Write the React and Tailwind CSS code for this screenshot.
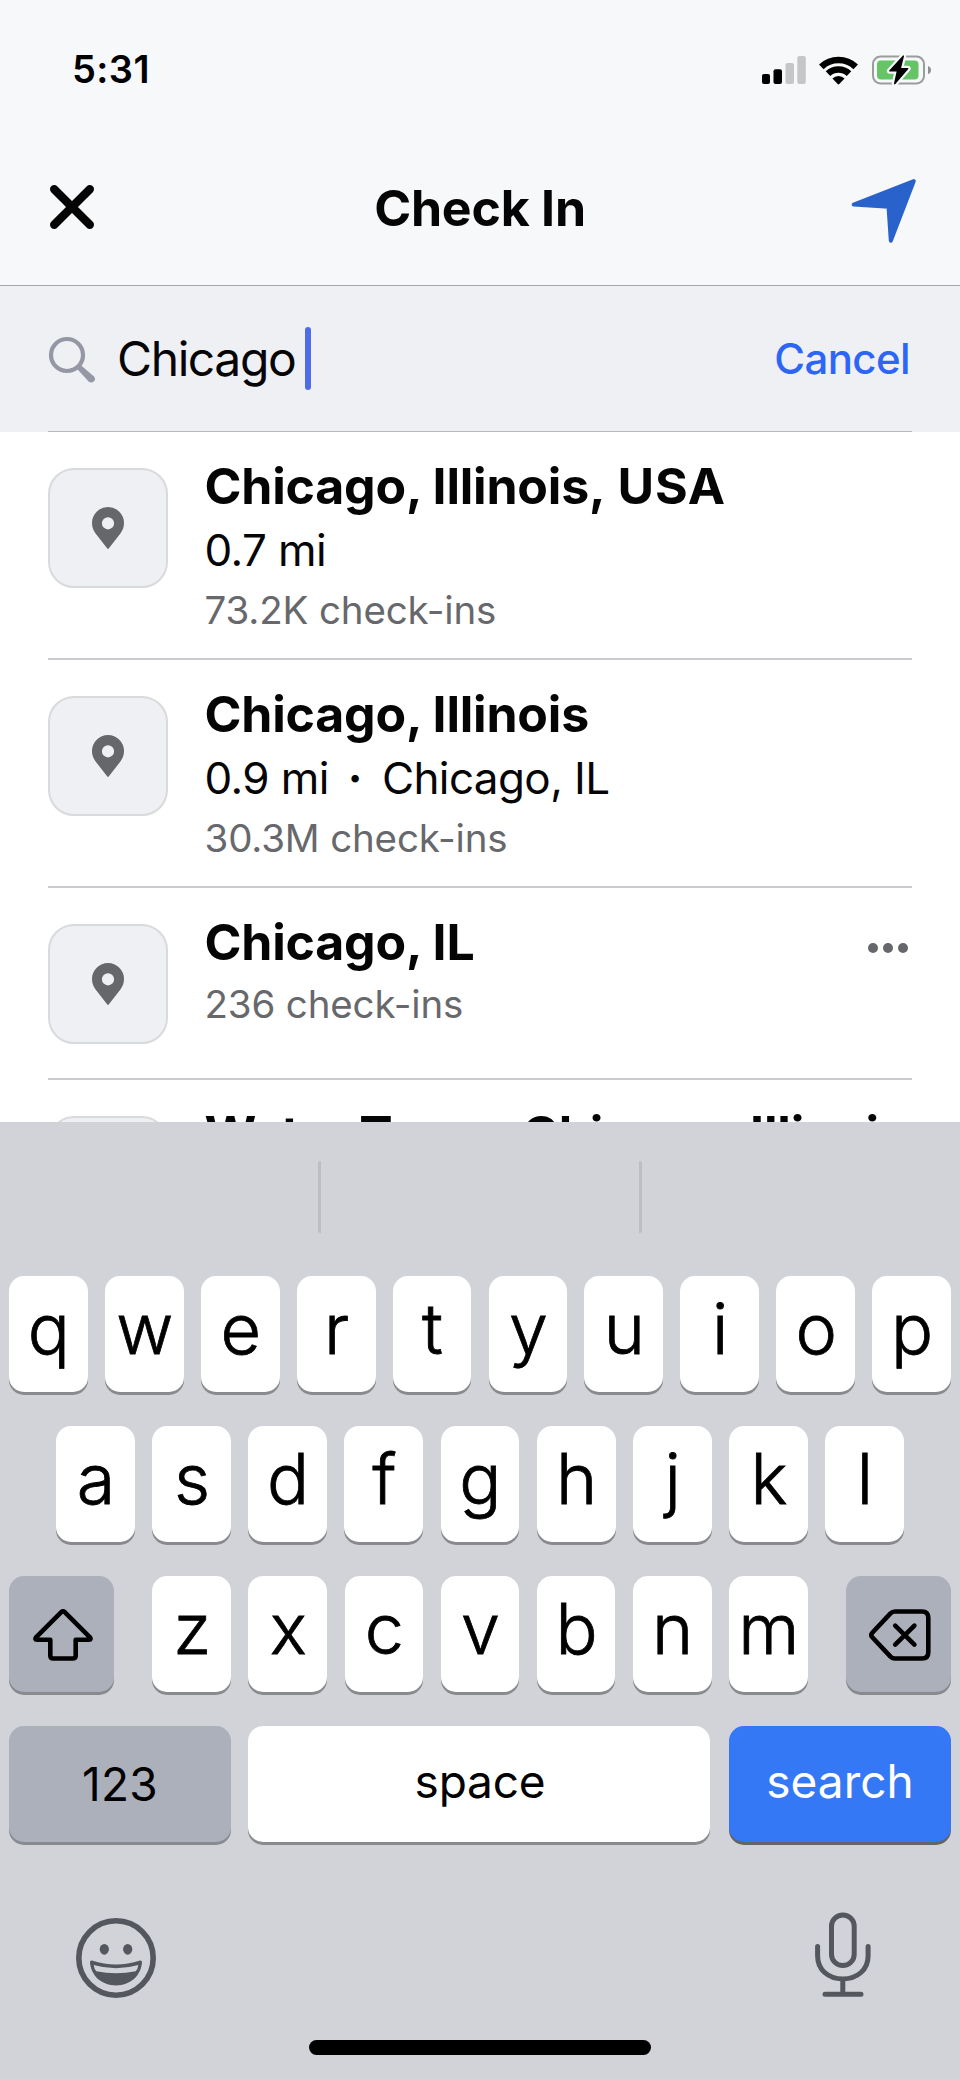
/**
 * Check-in place search, with the iOS keyboard open.
 */
import { clsx } from 'clsx';

const PLACES = [
  {
    id: 1,
    name: (
      <>
        Chicago, Illinois
        <span className="tracking-[0.8px]">, USA</span>
      </>
    ),
    detail: '0.7 mi',
    checkIns: '73.2K check-ins',
  },
  { id: 2, name: 'Chicago, Illinois', detail: '0.9 mi', area: 'Chicago, IL', checkIns: '30.3M check-ins' },
  { id: 3, name: 'Chicago, IL', checkIns: '236 check-ins', menu: true },
  {
    id: 4,
    name: (
      <>
        <span className="tracking-[-0.5px]">Water </span>
        <span className="tracking-[-1.8px]">Tower, </span>
        Chicago, Illinois
      </>
    ),
  },
];

function SignalIcon() {
  return (
    <svg width="44" height="28" viewBox="0 0 44 28" aria-hidden="true">
      <rect x="0" y="18" width="8" height="10" rx="2" />
      <rect x="11.5" y="13.3" width="8.5" height="14.7" rx="2" />
      <rect x="23.5" y="7" width="8.5" height="21" rx="2" fill="#c5c6c8" />
      <rect x="35.3" y="0" width="8.5" height="28" rx="2" fill="#c5c6c8" />
    </svg>
  );
}

function WifiIcon() {
  return (
    <svg width="39" height="30" viewBox="0 0 39 30" aria-hidden="true">
      <g fill="none" stroke="#000" strokeWidth="6.6">
        <path d="M2.3 11.9a25 25 0 0 1 34.4 0" />
        <path d="M9 18.7a15.3 15.3 0 0 1 21 0" />
      </g>
      <path d="M13.4 23.6a8.6 8.6 0 0 1 12.2 0L20.3 29q-.8.8-1.6 0z" />
    </svg>
  );
}

function BatteryIcon() {
  return (
    <svg width="60" height="32" viewBox="0 0 60 32" aria-hidden="true">
      <rect x="1" y="2.5" width="51" height="27" rx="7.5" fill="none" stroke="#9b9c9e" strokeWidth="2" />
      <rect x="5" y="6.5" width="41.5" height="19" rx="4" fill="#65c466" />
      <path d="M56 12q3 1 3 4t-3 4z" fill="#8e8f91" />
      <path
        d="M31 1.5 17.2 16.6q-.5.9.6.9h6.8L22 29.5q.3 1.5 1.4.5L36.3 15q.5-1-.6-1h-6.6L32 2.3q-.2-1.3-1-.8z"
        stroke="#f7f8fa"
        strokeWidth="4.5"
        paintOrder="stroke"
      />
    </svg>
  );
}

function PinIcon() {
  return (
    <svg width="32" height="42" viewBox="0 0 32 42" aria-hidden="true">
      <path
        fill="#66676b"
        fillRule="evenodd"
        d="M16 0a16 16 0 0 1 16 16c0 4-1.2 7.4-3.6 10.5L16.7 41.5q-.7.8-1.4 0L3.6 26.5C1.2 23.4 0 20 0 16A16 16 0 0 1 16 0zm0 10.2a6.1 6.1 0 1 0 0 12.2 6.1 6.1 0 0 0 0-12.2z"
      />
    </svg>
  );
}

function PlaceRow({ place }) {
  return (
    <li className={clsx('flex items-start border-b-2 border-[#c9c9d0]', place.detail ? 'h-[228px]' : 'h-[192px]')}>
      <div className="mt-9 flex h-[120px] w-[120px] shrink-0 items-center justify-center rounded-[26px] border-2 border-[#d9dadc] bg-[#eff0f4]">
        <PinIcon />
      </div>
      <div className="ml-[36.5px] flex-1 pt-6 whitespace-nowrap">
        <h2 className="text-[50px] leading-[60px] font-bold tracking-[-0.2px] text-[#050505]">{place.name}</h2>
        {place.detail ? (
          <p className="text-[44px] leading-[68px] tracking-[-0.6px] text-[#050505]">
            {place.detail}
            {place.area ? (
              <>
                <span className="mr-[20px] ml-[19px] font-bold">·</span>
                <span>{place.area}</span>
              </>
            ) : null}
          </p>
        ) : null}
        {place.checkIns ? (
          <p className={clsx('text-[38.5px] leading-[52px] tracking-[-0.15px] text-[#67686c]', !place.detail && 'mt-1.5')}>
            {place.checkIns}
          </p>
        ) : null}
      </div>
      {place.menu ? (
        <button type="button" className="mt-[55px] mr-1 flex gap-[5px]" aria-label="More options">
          <span className="size-2.5 rounded-full bg-[#66676b]" />
          <span className="size-2.5 rounded-full bg-[#66676b]" />
          <span className="size-2.5 rounded-full bg-[#66676b]" />
        </button>
      ) : null}
    </li>
  );
}

function Key({ children, className, ...rest }) {
  return (
    <button
      type="button"
      className={clsx('flex h-[116px] items-center justify-center rounded-[15px]', className)}
      {...rest}
    >
      {children}
    </button>
  );
}

function LetterKeys({ letters }) {
  return letters.split('').map((letter) => (
    <Key
      key={letter}
      className="w-[78.8px] shrink-0 bg-white pb-2.5 pl-px text-[70px] leading-[106px] font-light shadow-[0_3px_0_#898a8e] [-webkit-text-stroke:0.8px_#000]"
    >
      {letter}
    </Key>
  ));
}

function Keyboard() {
  return (
    <section className="h-[957px] bg-[#d2d3d8] text-black">
      {/* empty suggestion bar */}
      <div className="flex h-[154px] justify-center pt-[39px]">
        <div className="h-[72px] w-[324px] rounded-xs border-x-[3px] border-[#bdbec3]" />
      </div>

      <div className="flex flex-col gap-[34px] px-[9px]">
        <div className="flex justify-between">
          <LetterKeys letters="qwertyuiop" />
        </div>
        <div className="flex justify-between px-[47px]">
          <LetterKeys letters="asdfghjkl" />
        </div>
        <div className="flex justify-between">
          <Key className="w-[105px] bg-[#abb0bb] pt-0.5 pl-[3px] shadow-[0_3px_0_#898a8e]" aria-label="Shift">
            <svg width="60" height="52" viewBox="0 0 60 52" fill="none" stroke="#000" strokeWidth="4.6" strokeLinejoin="round" aria-hidden="true">
              <path d="M28.5 2.9q1.5-1.3 3 0L57 28.3q1.5 2.2-1 2.5H42.7v15.7q0 3-3 3H20.3q-3 0-3-3V30.8H4q-2.5-.3-1-2.5z" />
            </svg>
          </Key>
          <div className="flex gap-[17.3px]">
            <LetterKeys letters="zxcvbnm" />
          </div>
          <Key className="w-[105px] bg-[#abb0bb] pt-0.5 pl-[3px] shadow-[0_3px_0_#898a8e]" aria-label="Delete">
            <svg width="62" height="52" viewBox="0 0 62 52" fill="none" stroke="#000" strokeWidth="4.6" strokeLinejoin="round" strokeLinecap="round" aria-hidden="true">
              <path d="M26 2.5h27q6.3 0 6.3 6.3v34.4q0 6.3-6.3 6.3H26q-2.6 0-4.5-1.9L3.3 28.2q-2-2.2 0-4.4L21.5 4.4Q23.4 2.5 26 2.5z" />
              <path d="m26.2 16.6 19.2 19M45.4 16.6l-19.2 19" />
            </svg>
          </Key>
        </div>
        <div className="flex">
          <Key className="w-[222px] bg-[#abb0bb] text-[46px] tracking-[0.3px] shadow-[0_3px_0_#898a8e]">123</Key>
          <Key className="ml-[17px] w-[462px] bg-white pb-[5px] pl-0.5 text-[46px] tracking-[-0.2px] shadow-[0_3px_0_#898a8e]">space</Key>
          <Key className="ml-[19px] w-[222px] bg-[#3478f6] pb-[5px] text-[46px] text-white shadow-[0_3px_0_#626469]">search</Key>
        </div>
      </div>

      <div className="mt-[70px] flex h-[86px] items-center justify-between pr-[89px] pl-[76px]">
        <svg width="80" height="80" viewBox="0 0 80 80" className="mt-1.5" fill="#54575d" aria-hidden="true">
          <circle cx="40" cy="40" r="37.2" fill="none" stroke="#54575d" strokeWidth="5.6" />
          <ellipse cx="28.3" cy="31.3" rx="4.6" ry="5.4" />
          <ellipse cx="51.7" cy="31.3" rx="4.6" ry="5.4" />
          <path
            fillRule="evenodd"
            d="M16 42.5q24 8 48 0 2.3-.3 2 2.3C64.5 58.5 54 67.4 40 67.4S15.5 58.5 14 44.8q-.3-2.6 2-2.3zM17.7 47q.4 4 2.6 6.2 19.7 4.2 39.4 0 2.2-2.2 2.6-6.2-22.3 6.6-44.6 0z"
          />
        </svg>
        <svg width="56" height="86" viewBox="0 0 56 86" fill="none" stroke="#54575d" strokeWidth="5" strokeLinecap="round" aria-hidden="true">
          <rect x="16.5" y="3" width="22.7" height="50.5" rx="11.35" />
          <path d="M2.6 34.5V44C2.6 57.5 13 66.9 27.8 66.9S53.1 57.5 53.1 44v-9.5M27.8 66.9v15.4M10 82.3h36" />
        </svg>
      </div>

      {/* home indicator */}
      <div className="mx-auto mt-[42px] h-[15px] w-[342px] rounded-full bg-black" />
    </section>
  );
}

export default function App() {
  return (
    <main className="flex h-[2079px] w-[960px] flex-col overflow-hidden bg-white font-['Inter',sans-serif]">
      <header className="h-[286px] border-b border-[#a6a7aa] bg-[#f7f8fa]">
        <div className="flex h-[131px] items-center pt-2 pr-7 pl-[72px]">
          <span className="text-[38px] font-semibold tracking-[0.4px] text-black">5:31</span>
          <div className="ml-auto flex items-center">
            <SignalIcon />
            <span className="ml-[13px]"><WifiIcon /></span>
            <span className="ml-3.5"><BatteryIcon /></span>
          </div>
        </div>
        <div className="grid h-[154px] grid-cols-[1fr_auto_1fr] items-center px-[43px]">
          <button type="button" className="justify-self-start pb-0.5 pl-[7px]" aria-label="Close">
            <svg width="44" height="44" viewBox="0 0 44 44" stroke="#050505" strokeWidth="8.4" strokeLinecap="round" aria-hidden="true">
              <path d="m4.2 4.2 35.6 35.6M39.8 4.2 4.2 39.8" />
            </svg>
          </button>
          <h1 className="text-[50px] leading-[60px] font-bold tracking-[-0.2px] text-[#050505]">Check In</h1>
          <button type="button" className="justify-self-end pt-1.5" aria-label="Use my location">
            <svg width="66" height="66" viewBox="0 0 66 66" fill="#2962cb" stroke="#2962cb" strokeWidth="4" strokeLinejoin="round" aria-hidden="true">
              <path d="M62.8 3 2.7 26.5l34.8 2.2 2.3 34z" />
            </svg>
          </button>
        </div>
      </header>

      <div className="h-[146px] bg-[#eff0f4] px-12">
        <div className="flex h-full items-center border-b border-[#b9babe]">
          <svg width="48" height="48" viewBox="0 0 48 48" className="mt-0.5" aria-hidden="true">
            <circle cx="19" cy="19" r="16" fill="none" stroke="#9598a4" strokeWidth="4.2" />
            <path d="m29.4 33.2 3.8-3.8 12.8 11q2.3 3-.2 5.2-2.7 2-5.2 0z" fill="#9598a4" />
          </svg>
          <span className="ml-[21px] text-[48px] tracking-[-1.4px] text-[#050505]">Chicago</span>
          <span className="ml-2.5 h-[63px] w-1.5 rounded-full bg-[#4f6de6]" />
          <button type="button" className="mr-0.5 ml-auto text-[42px] font-medium tracking-[-0.6px] text-[#2d66f6]">Cancel</button>
        </div>
      </div>

      <ul className="h-[690px] overflow-hidden px-12">
        {PLACES.map((place) => (
          <PlaceRow key={place.id} place={place} />
        ))}
      </ul>

      <Keyboard />
    </main>
  );
}
